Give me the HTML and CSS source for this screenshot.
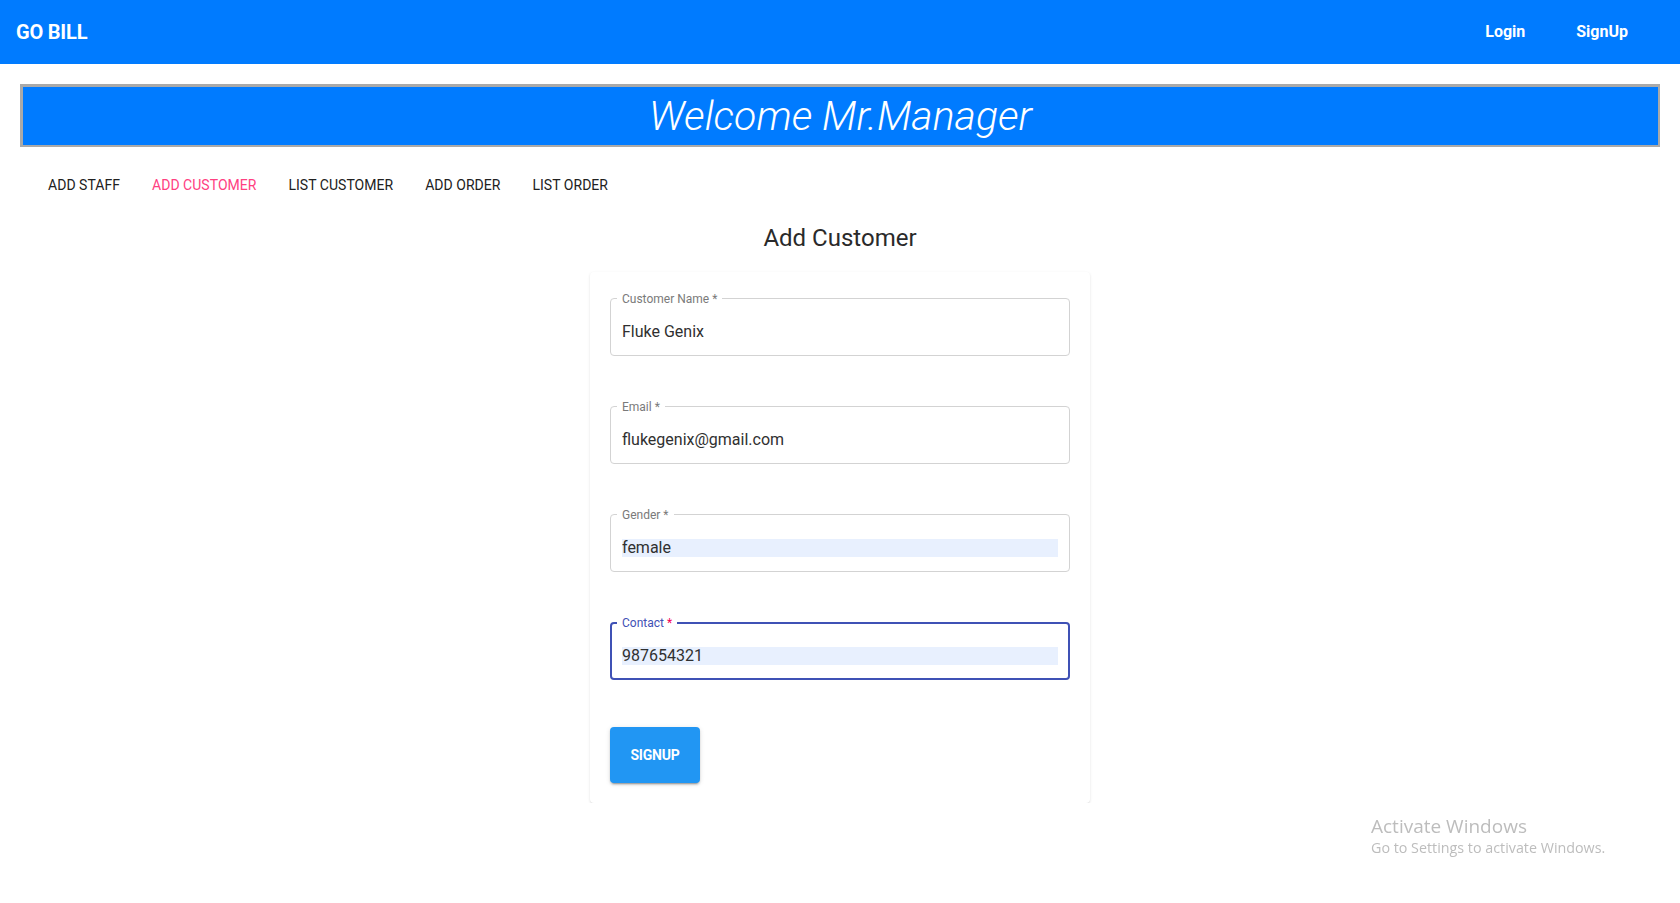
FILE: index.html
```html
<!DOCTYPE html>
<html lang="en">
<head>
<meta charset="utf-8">
<title>GO BILL - Add Customer</title>
<link rel="stylesheet" href="styles.css">
</head>
<body>
<header class="navbar">
  <div class="brand">GO BILL</div>
  <nav class="nav-links">
    <a class="nav-link" href="#">Login</a>
    <a class="nav-link" href="#">SignUp</a>
  </nav>
</header>

<div class="banner">
  <h1 class="banner-title">Welcome Mr.Manager</h1>
</div>

<nav class="tabs">
  <span class="tab">Add Staff</span>
  <span class="tab tab-active">Add Customer</span>
  <span class="tab">List Customer</span>
  <span class="tab">Add Order</span>
  <span class="tab">List Order</span>
</nav>

<main class="content">
  <h2 class="page-title">Add Customer</h2>
  <form class="card">
    <div class="fields">
      <div class="field">
        <label class="field-label">Customer Name *</label>
        <input class="field-input" type="text" value="Fluke Genix" readonly>
      </div>
      <div class="field">
        <label class="field-label">Email *</label>
        <input class="field-input" type="text" value="flukegenix@gmail.com" readonly>
      </div>
      <div class="field">
        <label class="field-label">Gender *</label>
        <input class="field-input autofilled" type="text" value="female" readonly>
      </div>
      <div class="field field-focused">
        <label class="field-label">Contact <span class="req">*</span></label>
        <input class="field-input autofilled" type="text" value="987654321" readonly>
      </div>
    </div>
    <div class="actions">
      <button class="btn-primary" type="button">Signup</button>
    </div>
  </form>
</main>

<div class="watermark">
  <div class="wm-title">Activate Windows</div>
  <div class="wm-sub">Go to Settings to activate Windows.</div>
</div>
</body>
</html>
```

FILE: styles.css
```css
* { box-sizing: border-box; }

html, body {
  margin: 0;
  padding: 0;
  background: #ffffff;
  font-family: Roboto, "Liberation Sans", Arial, sans-serif;
  color: #212121;
}

.navbar {
  height: 64px;
  background: #007bff;
  display: flex;
  align-items: center;
  justify-content: space-between;
  padding: 0 52px 0 16px;
}

.brand {
  color: #ffffff;
  font-size: 20px;
  font-weight: 700;
  letter-spacing: -0.2px;
}

.nav-links {
  display: flex;
  gap: 51px;
  margin-top: -1px;
}

.nav-link {
  color: #ffffff;
  font-size: 16px;
  font-weight: 700;
  text-decoration: none;
}

.banner {
  margin: 20px 20px 0;
  background: #007bff;
  border-style: solid;
  border-color: #a9a9a9;
  border-width: 3px 2px 2px 3px;
}

.banner-title {
  margin: 0;
  height: 58px;
  line-height: 58px;
  text-align: center;
  color: #ffffff;
  font-size: 41px;
  font-weight: 300;
  font-style: italic;
}

.tabs {
  display: flex;
  margin-top: 14px;
  padding-left: 32px;
  height: 48px;
}

.tab {
  display: flex;
  align-items: center;
  padding: 0 16px;
  font-size: 14px;
  font-weight: 400;
  letter-spacing: 0.03px;
  text-transform: uppercase;
  color: #212121;
}

.tab-active {
  color: #ff4081;
}

.content {
  display: flex;
  flex-direction: column;
  align-items: center;
}

.page-title {
  margin: 13px 0 0;
  font-size: 24px;
  line-height: 32px;
  font-weight: 400;
  color: #2a2a2a;
}

.card {
  margin-top: 18px;
  width: 500px;
  padding: 26px 20px 20px;
  background: #ffffff;
  border-radius: 4px;
  box-shadow: 0 1px 3px rgba(0, 0, 0, 0.11), 0 1px 1px rgba(0, 0, 0, 0.05);
}

.fields {
  display: flex;
  flex-direction: column;
  gap: 50px;
}

.field {
  position: relative;
  height: 58px;
  border: 1px solid #d3d3d3;
  border-radius: 4px;
  padding: 24px 11px 0;
}

.field-label {
  position: absolute;
  top: -7px;
  left: 6px;
  padding: 0 5px;
  background: #ffffff;
  font-size: 12px;
  line-height: 14px;
  color: #7a7a7a;
}

.field-input {
  display: block;
  width: 100%;
  height: 18px;
  margin: 0;
  padding: 0;
  border: 0;
  outline: none;
  background: transparent;
  font-family: Roboto, "Liberation Sans", Arial, sans-serif;
  font-size: 16px;
  line-height: 18px;
  color: #303030;
}

.plain {
  margin-top: -1px;
}

.autofilled {
  background: #e8f0fe;
}

.field-focused {
  border: 2px solid #3f51b5;
  padding: 23px 10px 0;
}

.field-focused .field-label {
  top: -8px;
  left: 5px;
  color: #3f51b5;
}

.req {
  color: #f50057;
}

.actions {
  margin-top: 47px;
  display: flex;
}

.btn-primary {
  width: 90px;
  height: 56px;
  border: 0;
  border-radius: 4px;
  background: #2196f3;
  color: #ffffff;
  font-family: Roboto, "Liberation Sans", Arial, sans-serif;
  font-size: 14px;
  font-weight: 700;
  text-transform: uppercase;
  letter-spacing: -0.2px;
  box-shadow: 0 3px 1px -2px rgba(0, 0, 0, 0.2), 0 2px 2px 0 rgba(0, 0, 0, 0.14), 0 1px 5px 0 rgba(0, 0, 0, 0.12);
}

.watermark {
  position: fixed;
  left: 1371px;
  top: 815px;
  font-family: "Open Sans", "Noto Sans", sans-serif;
  color: #bdbdbd;
}

.wm-title {
  font-size: 19px;
  line-height: 22px;
}

.wm-sub {
  font-size: 14.3px;
  line-height: 22px;
}
```
